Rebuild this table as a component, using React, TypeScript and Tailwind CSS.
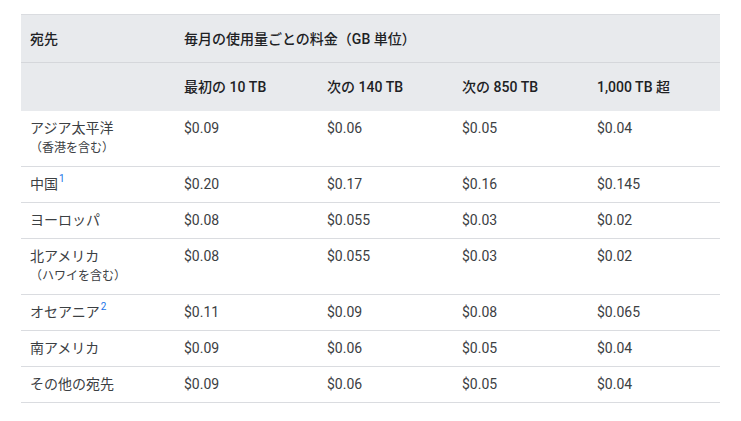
import React from "react";

type Row = {
  name: string;
  note?: string;
  sup?: string;
  prices: string[];
};

const rows: Row[] = [
  { name: "アジア太平洋", note: "（香港を含む）", prices: ["$0.09", "$0.06", "$0.05", "$0.04"] },
  { name: "中国", sup: "1", prices: ["$0.20", "$0.17", "$0.16", "$0.145"] },
  { name: "ヨーロッパ", prices: ["$0.08", "$0.055", "$0.03", "$0.02"] },
  { name: "北アメリカ", note: "（ハワイを含む）", prices: ["$0.08", "$0.055", "$0.03", "$0.02"] },
  { name: "オセアニア", sup: "2", prices: ["$0.11", "$0.09", "$0.08", "$0.065"] },
  { name: "南アメリカ", prices: ["$0.09", "$0.06", "$0.05", "$0.04"] },
  { name: "その他の宛先", prices: ["$0.09", "$0.06", "$0.05", "$0.04"] },
];

const tiers = ["最初の 10 TB", "次の 140 TB", "次の 850 TB", "1,000 TB 超"];

export default function App() {
  return (
    <div
      className="min-h-screen bg-white pt-[14px] pl-[21px]"
      style={{ fontFamily: 'Roboto, "Noto Sans CJK JP", sans-serif' }}
    >
      <table className="w-[699px] table-fixed border-collapse text-[14px] leading-5 text-[#3c4043]">
        <colgroup>
          <col className="w-[154px]" />
          <col className="w-[143px]" />
          <col className="w-[135px]" />
          <col className="w-[135px]" />
          <col className="w-[132px]" />
        </colgroup>
        <thead className="bg-[#e8eaed] text-[#202124]">
          <tr className="h-[48px] border-t border-[#dadce0]">
            <th className="px-[9px] text-left font-medium">宛先</th>
            <th colSpan={4} className="px-[9px] text-left font-medium">
              毎月の使用量ごとの料金（GB 単位）
            </th>
          </tr>
          <tr className="h-[48px] border-t border-[#d5d7db]">
            <th />
            {tiers.map((t) => (
              <th key={t} className="px-[9px] text-left font-medium">
                {t}
              </th>
            ))}
          </tr>
        </thead>
        <tbody>
          {rows.map((r) => (
            <tr key={r.name} className="border-b border-[#dadce0] align-top">
              <td className="px-[9px] pt-[7px] pb-2">
                <div className="h-5">
                  {r.name}
                  {r.sup && (
                    <sup className="ml-[1px] -top-[7px] text-[10px] leading-none text-[#1a73e8]">
                      {r.sup}
                    </sup>
                  )}
                </div>
                {r.note && <div className="text-[12px] leading-5">{r.note}</div>}
              </td>
              {r.prices.map((p, i) => (
                <td key={i} className="px-[9px] pt-[7px] pb-2">
                  {p}
                </td>
              ))}
            </tr>
          ))}
        </tbody>
      </table>
    </div>
  );
}
